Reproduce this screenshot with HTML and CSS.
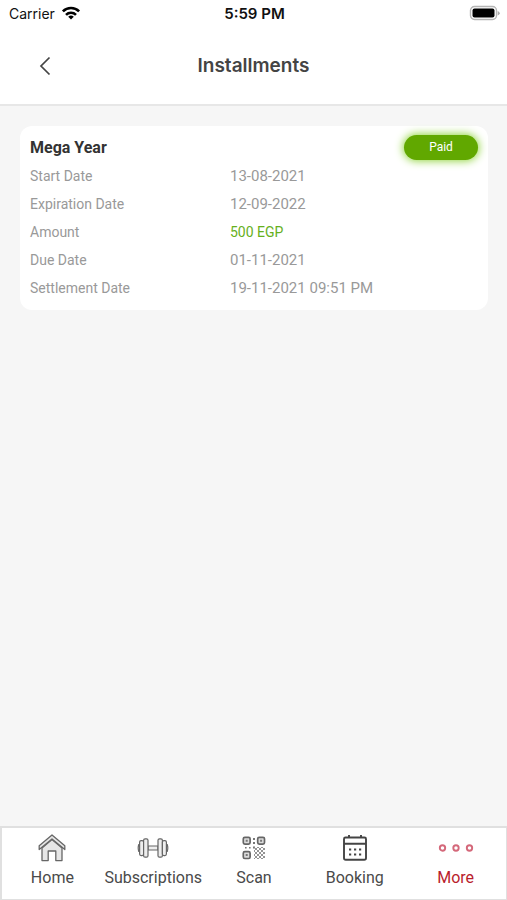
FILE: index.html
```html
<!DOCTYPE html>
<html lang="en">
<head>
<meta charset="utf-8">
<meta name="viewport" content="width=device-width, initial-scale=1">
<title>Installments</title>
<link rel="stylesheet" href="styles.css">
</head>
<body>
<div class="status-bar">
  <div class="carrier">
    <span>Carrier</span>
    <svg width="20" height="14" viewBox="0 0 20 14" aria-hidden="true">
      <g fill="none" stroke="#000" stroke-width="2.6">
        <path d="M1.9 5.4a11.4 11.4 0 0 1 16.2 0"/>
        <path d="M5 8.8a7.1 7.1 0 0 1 10 0"/>
      </g>
      <path d="M10 13.6L7.2 10.8a4 4 0 0 1 5.6 0z"/>
    </svg>
  </div>
  <span class="clock">5:59 PM</span>
  <svg class="battery" width="31" height="16" viewBox="0 0 31 16" aria-hidden="true">
    <rect x="1.5" y="1.5" width="26" height="13" rx="4" fill="#fff" stroke="#b5b5b5" stroke-width="1.4"/>
    <rect x="3.500" y="3.500" width="22" height="9" rx="2" fill="#000"/>
    <path d="M28.700 6v4.400q2-.8 2-2.200t-2-2.200z" fill="#aaa"/>
  </svg>
</div>

<header class="nav-bar">
  <button class="back" type="button" aria-label="Back">
    <svg width="12" height="20" viewBox="0 0 12 20" aria-hidden="true"><path d="M10.500 1.500L2 10l8.500 8.500" fill="none" stroke="#444" stroke-width="1.700"/></svg>
  </button>
  <h1>Installments</h1>
</header>

<main>
  <article class="card">
    <div class="card-head">
      <h2>Mega Year</h2>
      <span class="badge">Paid</span>
    </div>
    <dl>
      <dt>Start Date</dt><dd>13-08-2021</dd>
      <dt>Expiration Date</dt><dd>12-09-2022</dd>
      <dt>Amount</dt><dd class="amount">500 EGP</dd>
      <dt>Due Date</dt><dd>01-11-2021</dd>
      <dt>Settlement Date</dt><dd>19-11-2021 09:51 PM</dd>
    </dl>
  </article>
</main>

<nav class="tabs">
  <a href="#home">
    <svg width="28" height="28" viewBox="0 0 28 28" aria-hidden="true">
      <g fill="#e6e6e6" stroke="#666" stroke-width="1.300" stroke-linejoin="round">
        <path d="M4 14v12.600h6.200v-9.600h7.600v9.600H24V14L14 5.500z"/>
        <path d="M14 1L1.200 11.800v3.800L14 5l12.800 10.600v-3.800z"/>
      </g>
    </svg>
    <span>Home</span>
  </a>
  <a href="#subscriptions">
    <svg width="32" height="28" viewBox="0 0 32 28" aria-hidden="true">
      <g fill="#eee" stroke="#666" stroke-width="1.200">
        <path d="M11 12h10v4H11z"/>
        <path d="M3 10.500H1.800Q.6 14 1.800 17.500H3zM29 10.500h1.200q1.200 3.500 0 7H29z"/>
        <rect x="2.600" y="6.600" width="4" height="15" rx="1.500"/>
        <rect x="6.600" y="4.800" width="4.400" height="18.400" rx="1.500"/>
        <rect x="21" y="4.800" width="4.400" height="18.400" rx="1.500"/>
        <rect x="25.400" y="6.600" width="4" height="15" rx="1.500"/>
      </g>
    </svg>
    <span>Subscriptions</span>
  </a>
  <a href="#scan">
    <svg width="24" height="28" viewBox="0 0 24 28" aria-hidden="true">
      <g fill="#ddd" stroke="#666" stroke-width="1.700">
        <rect x="1.300" y="3.300" width="6.800" height="6.800" rx="1.500"/>
        <rect x="15.700" y="3.300" width="6.800" height="6.800" rx="1.500"/>
        <rect x="1.300" y="17.700" width="6.800" height="6.800" rx="1.500"/>
      </g>
      <g fill="#777">
        <path d="M3.700 5.700h2v2h-2zM18.100 5.700h2v2h-2zM3.700 20.100h2v2h-2z"/>
        <path d="M11 4h2v2h-2zM11 8h2v2h-2zM3 13h1.600v1.600H3zM7 13h1.600v1.600H7zM11 12.500h2v2h-2z"/>
      </g>
      <path d="M12 17l4-4M12 21l8-8M12 25l11-11M16 25l7-7M20 25l3-3M12 21l4 4M12 17l8 8M12 13l11 11M16 13l7 7M20 13l3 3" fill="none" stroke="#888" stroke-width=".9"/>
    </svg>
    <span>Scan</span>
  </a>
  <a href="#booking">
    <svg width="26" height="28" viewBox="0 0 26 28" aria-hidden="true">
      <path d="M3.500 3.500h19q1.500 0 1.500 1.500v19q0 1.800-1.800 1.800H3.800Q2 25.800 2 24V5q0-1.500 1.500-1.500zM2 9.800h22M7 1v3M19 1v3" fill="none" stroke="#444" stroke-width="1.900"/>
      <path d="M7 14.500h2.200v2H7zM12 14.500h2.200v2H12zM17 14.500h2.200v2H17zM7 19.500h2.200v2H7zM12 19.500h2.200v2H12zM17 19.500h2.200v2H17z" fill="#444"/>
    </svg>
    <span>Booking</span>
  </a>
  <a class="active" href="#more" aria-current="page">
    <svg width="36" height="28" viewBox="0 0 36 28" aria-hidden="true">
      <g fill="#fff" stroke="#d4687a" stroke-width="1.900">
        <circle cx="4.500" cy="14" r="2.700"/><circle cx="18" cy="14" r="2.700"/><circle cx="31.500" cy="14" r="2.700"/>
      </g>
    </svg>
    <span>More</span>
  </a>
</nav>
</body>
</html>
```
FILE: styles.css
```css
* {
  box-sizing: border-box;
}

body {
  margin: 0;
  min-height: 100vh;
  display: flex;
  flex-direction: column;
  background: #f6f6f6;
  color: #444;
  font-family: Roboto, "Noto Sans", sans-serif;
}

h1, h2, dl, dd {
  margin: 0;
}

.status-bar {
  display: grid;
  grid-template-columns: 1fr auto 1fr;
  align-items: center;
  height: 28px;
  padding: 0 7px 2px 9px;
  background: #fff;
  color: #111;
  font-family: Inter, sans-serif;
  font-size: 14px;
}

.carrier {
  display: flex;
  align-items: center;
  gap: 6px;
}

.clock {
  font-size: 15px;
  font-weight: 600;
}

.battery {
  justify-self: end;
}

.nav-bar {
  display: grid;
  grid-template-columns: 60px 1fr 60px;
  align-items: center;
  height: 78px;
  padding: 0 15px;
  background: #fff;
  border-bottom: 2px solid #e7e7e7;
}

.back {
  display: flex;
  justify-content: center;
  padding: 8px 0;
  border: 0;
  background: none;
}

h1 {
  font: 600 19px/24px Inter, sans-serif;
  text-align: center;
}

main {
  flex: 1;
  padding: 20px 19px 20px 20px;
}

.card {
  padding: 6px 10px 8px;
  border-radius: 12px;
  background: #fff;
}

.card-head {
  display: flex;
  align-items: center;
  justify-content: space-between;
  height: 30px;
}

h2 {
  color: #333;
  font-size: 16px;
  font-weight: 700;
}

.badge {
  width: 74px;
  border-radius: 13px;
  background: #61a800;
  box-shadow: 0 0 8px 1px #8fd43c;
  color: #fff;
  font-size: 12px;
  line-height: 25px;
  text-align: center;
}

dl {
  display: grid;
  grid-template-columns: 200px 1fr;
  color: #999;
  font-size: 14px;
  line-height: 28px;
}

dd {
  font-size: 15px;
}

.amount {
  color: #66b01c;
  font-size: 14px;
}

.tabs {
  display: grid;
  grid-template-columns: repeat(5, 1fr);
  height: 74px;
  padding-top: 6px;
  border: 2px solid #e0e0e0;
  border-width: 2px 1px 1px 2px;
  background: #fff;
}

.tabs a {
  display: flex;
  flex-direction: column;
  align-items: center;
  gap: 4px;
  color: #4a4a4a;
  font-size: 16px;
  line-height: 24px;
  text-decoration: none;
}

.tabs .active {
  color: #b91c2c;
}
```
